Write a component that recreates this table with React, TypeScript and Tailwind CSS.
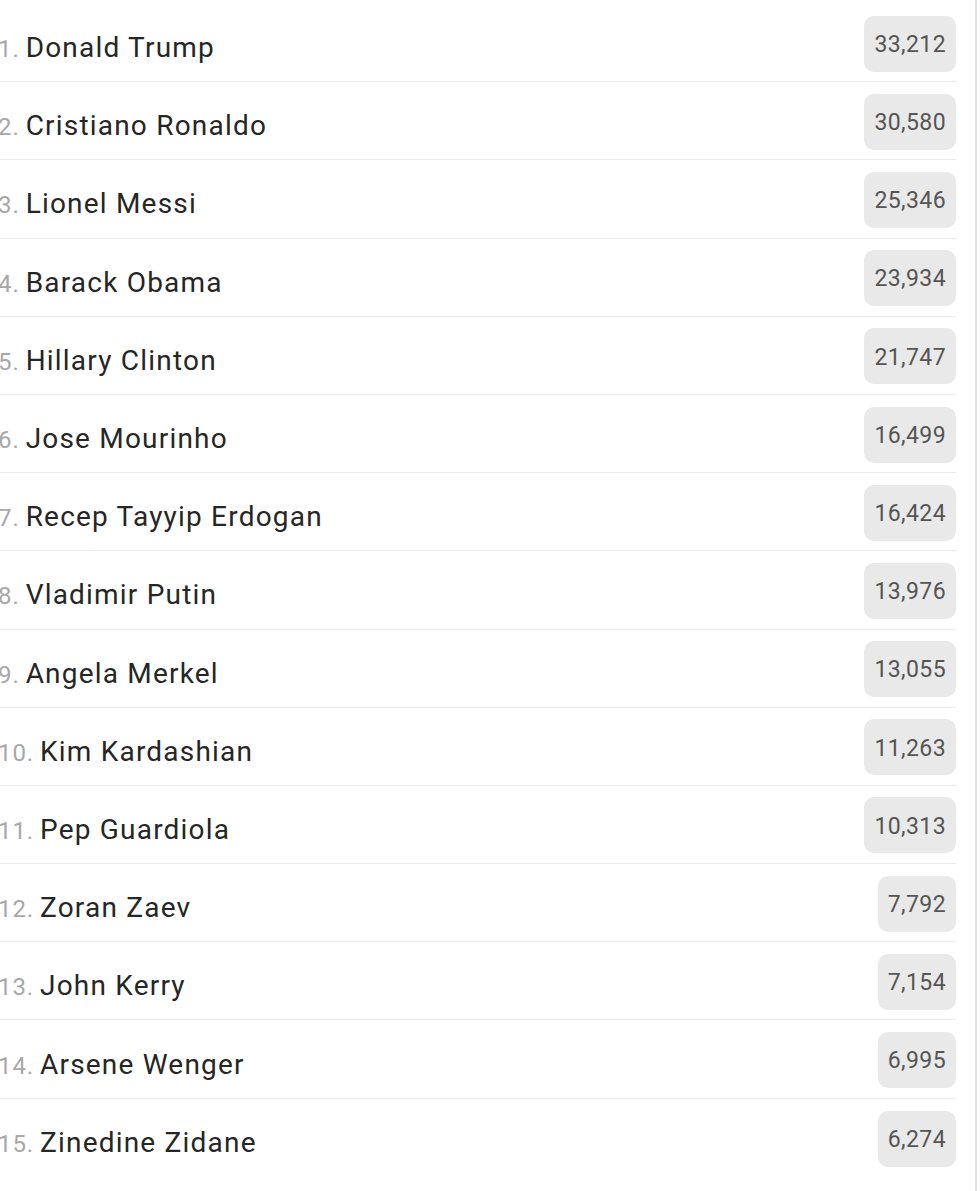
import React from "react";

const rows: [string, string][] = [
  ["Donald Trump", "33,212"],
  ["Cristiano Ronaldo", "30,580"],
  ["Lionel Messi", "25,346"],
  ["Barack Obama", "23,934"],
  ["Hillary Clinton", "21,747"],
  ["Jose Mourinho", "16,499"],
  ["Recep Tayyip Erdogan", "16,424"],
  ["Vladimir Putin", "13,976"],
  ["Angela Merkel", "13,055"],
  ["Kim Kardashian", "11,263"],
  ["Pep Guardiola", "10,313"],
  ["Zoran Zaev", "7,792"],
  ["John Kerry", "7,154"],
  ["Arsene Wenger", "6,995"],
  ["Zinedine Zidane", "6,274"],
];

export default function App() {
  return (
    <div className="w-[980px] h-[1191px] bg-white flex overflow-hidden" style={{ fontFamily: "Roboto, 'Liberation Sans', sans-serif" }}>
      <div className="w-[956px] pt-[4px] flex flex-col">
        {rows.map(([name, count], i) => (
          <div
            key={name}
            className={`h-[78.2px] shrink-0 flex items-center justify-between ${i < rows.length - 1 ? "border-b border-[#ececec]" : ""}`}
          >
            <div className="flex items-baseline pt-[11px] -ml-[2px]">
              <span className="text-[24px] text-[#a8a8a8] tracking-[0.9px]">{i + 1}.</span>
              <span className="ml-[6px] text-[28px] text-[#262626] tracking-[1.2px]">{name}</span>
            </div>
            <div className="h-[56px] px-[10px] pt-[3px] mt-[2px] rounded-[10px] bg-[#e9e9e9] flex items-center text-[23px] tracking-[0.4px] text-[#555]">
              {count}
            </div>
          </div>
        ))}
      </div>
      <div className="ml-[19px] w-[2px] h-full bg-[#e2e2e2]" />
    </div>
  );
}
